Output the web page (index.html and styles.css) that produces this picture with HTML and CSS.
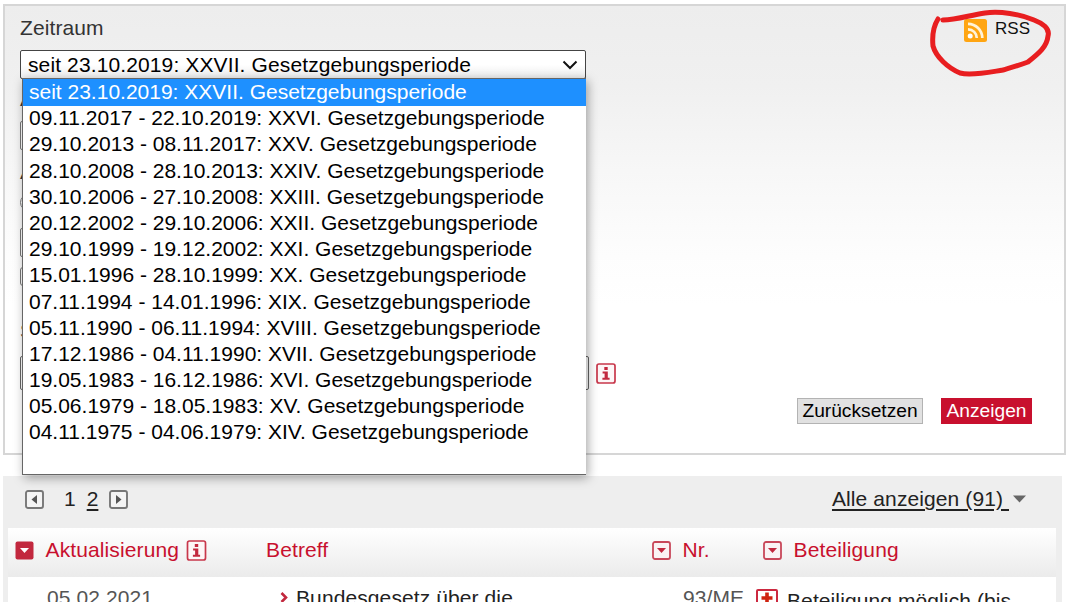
FILE: index.html
```html
<!DOCTYPE html>
<html lang="de">
<head>
<meta charset="utf-8">
<title>Gesetzgebungsperiode</title>
<link rel="stylesheet" href="styles.css">
</head>
<body>
<svg class="defs" width="0" height="0">
  <symbol id="info" viewBox="0 0 20 21">
    <rect x="1" y="1" width="18" height="19" rx="2" fill="#fdf6f7" stroke="#c8374b" stroke-width="1.7"/>
    <path d="M8.3 4h3.4v3H8.3zM6.6 8.6h5.2v6.2h1.8v2H6.4v-2h2.2v-4.2h-2z" fill="#c2283e"/>
  </symbol>
  <symbol id="sort" viewBox="0 0 19 19">
    <rect x="1" y="1" width="17" height="17" rx="2" fill="#faf3f4" stroke="#c8485a" stroke-width="1.8"/>
    <path d="M5 7h9l-4.5 5z" fill="#c2283e"/>
  </symbol>
</svg>
<main class="page">
  <section class="panel">
    <div class="fields">
      <div class="label">Zeitraum</div>
      <div class="select"><span>seit 23.10.2019: XXVII. Gesetzgebungsperiode</span>
        <svg width="16" height="10" viewBox="0 0 16 10"><path d="M1.5 1.5L8 8l6.5-6.5" fill="none" stroke="#111" stroke-width="2"/></svg>
        <ul class="options">
          <li class="active">seit 23.10.2019: XXVII. Gesetzgebungsperiode</li>
          <li>09.11.2017 - 22.10.2019: XXVI. Gesetzgebungsperiode</li>
          <li>29.10.2013 - 08.11.2017: XXV. Gesetzgebungsperiode</li>
          <li>28.10.2008 - 28.10.2013: XXIV. Gesetzgebungsperiode</li>
          <li>30.10.2006 - 27.10.2008: XXIII. Gesetzgebungsperiode</li>
          <li>20.12.2002 - 29.10.2006: XXII. Gesetzgebungsperiode</li>
          <li>29.10.1999 - 19.12.2002: XXI. Gesetzgebungsperiode</li>
          <li>15.01.1996 - 28.10.1999: XX. Gesetzgebungsperiode</li>
          <li>07.11.1994 - 14.01.1996: XIX. Gesetzgebungsperiode</li>
          <li>05.11.1990 - 06.11.1994: XVIII. Gesetzgebungsperiode</li>
          <li>17.12.1986 - 04.11.1990: XVII. Gesetzgebungsperiode</li>
          <li>19.05.1983 - 16.12.1986: XVI. Gesetzgebungsperiode</li>
          <li>05.06.1979 - 18.05.1983: XV. Gesetzgebungsperiode</li>
          <li>04.11.1975 - 04.06.1979: XIV. Gesetzgebungsperiode</li>
        </ul>
      </div>
      <div class="label second">A</div>
      <div class="box"></div>
      <div class="label third">A</div>
      <div class="radio"></div>
      <div class="box after-radio"></div>
      <div class="check"></div>
      <div class="label search-label">S</div>
      <div class="search-row"><div class="search"></div><svg width="20" height="21"><use href="#info"/></svg></div>
      <div class="buttons"><span class="button reset">Zurücksetzen</span><span class="button submit">Anzeigen</span></div>
    </div>
    <div class="rss">
      <svg width="23" height="23" viewBox="0 0 23 23">
        <rect width="23" height="23" rx="2.5" fill="#ffa512"/>
        <circle cx="6.2" cy="17" r="2.5" fill="#fff"/>
        <path d="M4 10.3a8.8 8.8 0 0 1 8.8 8.8M4 4.8a14.3 14.3 0 0 1 14.3 14.3" fill="none" stroke="#fff3d9" stroke-width="2.7"/>
      </svg>
      <span>RSS</span>
      <svg class="marker" width="130" height="80" viewBox="925 0 130 80"><path d="M938 19C933 27 932 36 933 46C936 57 948 68 960 73C972 76 990 72 1003 70C1013 67 1020 65 1028 62C1038 54 1047 47 1048 36C1050 29 1044 24 1034 20C1020 14 1000 11 985 13C970 15 957 20 943 20" fill="none" stroke="#e81e20" stroke-width="5" stroke-linecap="round" stroke-linejoin="round"/></svg>
    </div>
  </section>
  <section class="results">
    <div class="pager">
      <svg width="19" height="19" viewBox="0 0 19 19"><rect x="1" y="1" width="17" height="17" rx="2" fill="#f4f4f4" stroke="#777" stroke-width="1.9"/><path d="M12 5v9L6.5 9.5z" fill="#555"/></svg>
      <span class="current">1</span><span class="link">2</span>
      <svg width="19" height="19" viewBox="0 0 19 19"><rect x="1" y="1" width="17" height="17" rx="2" fill="#f4f4f4" stroke="#777" stroke-width="1.9"/><path d="M7 5v9l5.5-4.5z" fill="#555"/></svg>
      <span class="all">Alle anzeigen (91)&nbsp;</span>
      <svg class="caret" width="13" height="8" viewBox="0 0 13 8"><path d="M0 .5h13L6.5 7.5z" fill="#666"/></svg>
    </div>
    <div class="table">
      <div class="row head">
        <div class="cell"><svg class="sort" width="19" height="19" viewBox="0 0 19 19"><rect x=".5" y=".5" width="18" height="18" rx="2" fill="#c2283e"/><path d="M5 7h9l-4.5 5z" fill="#fff"/></svg><span>Aktualisierung</span><svg class="hint" width="21" height="21"><use href="#info"/></svg></div>
        <div class="cell">Betreff</div>
        <div class="cell"><svg class="sort" width="19" height="19"><use href="#sort"/></svg>Nr.</div>
        <div class="cell"><svg class="sort" width="19" height="19"><use href="#sort"/></svg>Beteiligung</div>
      </div>
      <div class="row data">
        <div class="cell date">05.02.2021</div>
        <div class="cell subject"><svg width="8" height="12" viewBox="0 0 8 12"><path d="M1.5 1l4.5 4.5L1.5 10" fill="none" stroke="#c2283e" stroke-width="2.6"/></svg>Bundesgesetz über die</div>
        <div class="cell number">93/ME</div>
        <div class="cell part"><svg width="22" height="22" viewBox="0 0 22 22"><rect x="1" y="1" width="20" height="20" rx="1" fill="#fff" stroke="#cc2940" stroke-width="2"/><path d="M9.2 3.500h3.600v3.700h3.700v3.600h-3.700v3.700H9.200v-3.700H5.500V7.200h3.700z" fill="#cf2310"/></svg>Beteiligung möglich (bis</div>
      </div>
    </div>
  </section>
</main>
</body>
</html>
```
FILE: styles.css
```css
* { box-sizing: border-box; }
body { margin: 0; background: #fff; color: #222; font: 21px/24px "Liberation Sans", Arial, sans-serif; }
svg { display: block; flex: none; }
.defs { position: absolute; }
.page { width: 1073px; height: 602px; overflow: hidden; padding: 4px 0 0 3px; }
.panel { position: relative; width: 1063px; height: 451px; border: 2px solid #d6d6d6; padding: 10px 15px 0; background: linear-gradient(#ededed 0, #f0f0f0 80px, #f7f7f7 165px, #fdfdfd 250px, #fff 300px); }
.label { height: 24px; color: #333; letter-spacing: .1px; }
.select { position: relative; z-index: 2; display: flex; align-items: center; justify-content: space-between; width: 566px; height: 29px; margin-top: 10px; padding: 0 7px; border: 1px solid #444; border-radius: 2px; background: linear-gradient(#fff 50%, #eee); color: #000; white-space: nowrap; letter-spacing: .12px; }
.options { position: absolute; top: 27px; left: 1px; width: 564px; height: 397px; margin: 0; padding: 0; list-style: none; background: #fff; border: 1px solid #666; border-right: 0; box-shadow: 2px 3px 10px rgba(0,0,0,.35); letter-spacing: 0; }
.options li { height: 26.2px; line-height: 26px; padding-left: 6px; }
.options .active { background: #1e90ff; color: #fff; box-shadow: 0 1px #1e90ff; }
.second { margin-top: 8px; }
.third { margin-top: 10px; }
.box { width: 566px; height: 29px; margin-top: 10px; border: 1px solid #777; border-radius: 2px; background: #fff; }
.radio { width: 17px; height: 17px; margin-top: 10px; border: 1px solid #777; border-radius: 50%; background: #fff; }
.after-radio { margin-top: 17px; }
.check { width: 19px; height: 19px; margin-top: 10px; border: 1px solid #777; border-radius: 3px; background: #fff; }
.search-label { margin-top: 33px; }
.search-row { display: flex; align-items: center; gap: 7px; margin-top: 13px; }
.search { width: 569px; height: 34px; border: 1px solid #666; border-radius: 2px; background: #fff; }
.buttons { display: flex; justify-content: flex-end; gap: 18px; margin: 8px 17px 0 0; }
.button { display: flex; align-items: center; justify-content: center; height: 26px; padding-bottom: 1px; font-size: 19.2px; }
.reset { width: 126px; border: 1px solid #b3b3b3; background: #e1e1e1; color: #000; }
.submit { width: 91px; background: #c8102e; color: #fff; }
.rss { position: absolute; top: 13px; right: 34px; display: flex; gap: 8px; font-size: 17px; line-height: 19px; color: #111; }
.marker { position: absolute; top: -19px; left: -39px; }
.results { width: 1059px; height: 126px; margin-top: 21px; padding: 0 6px 0 5px; background: #eee; }
.pager { display: flex; align-items: center; height: 52px; padding: 0 30px 6px 17px; }
.current { margin: 0 11px 0 20px; }
.link { margin-right: 11px; }
.link, .all { text-decoration: underline; text-decoration-thickness: 2px; text-underline-offset: 3px; }
.all { margin-left: auto; letter-spacing: .1px; }
.caret { margin-left: 4px; }
.row { display: grid; grid-template-columns: 258px 386px 111px 1fr; }
.head { height: 49px; padding-bottom: 5px; background: linear-gradient(#fff, #ebebeb); color: #c8102e; letter-spacing: .12px; }
.head .cell { display: flex; align-items: center; }
.head .cell:first-child { padding-left: 7px; }
.sort { margin-right: 11.5px; }
.hint { margin-left: 7px; }
.data { height: 30px; overflow: hidden; background: #fff; letter-spacing: .1px; }
.data .cell { display: flex; align-items: flex-start; padding-top: 9px; white-space: nowrap; }
.data .date { padding-left: 39px; color: #555; }
.subject { color: #222; }
.subject svg { margin: 6px 8px 0 14px; }
.data .number { padding-left: 31px; color: #555; }
.data .part { padding-top: 12px; }
.part svg { margin: 0 9px 0 -7px; }
```
